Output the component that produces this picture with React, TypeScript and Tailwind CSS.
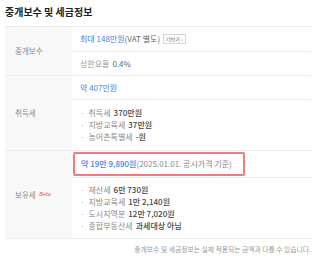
import { ReactNode } from 'react'

const font = { fontFamily: '"Noto Sans CJK KR", "Noto Sans", sans-serif' }

function Group({ label, children }: { label: ReactNode; children: ReactNode }) {
  return (
    <div className="flex border-b border-[#ececec]">
      <div className="w-[67px] shrink-0 bg-[#f8f8f8] flex items-center pl-[10px] text-[7.5px] text-[#8a8a8a]">{label}</div>
      <div className="flex-1 flex flex-col">{children}</div>
    </div>
  )
}

function Bullet({ name, value }: { name: string; value: string }) {
  return (
    <div className="flex items-center h-[12px]">
      <span className="text-[#aaa] mr-[4px]">·</span>
      <span className="text-[#8a8a8a] mr-[3px]">{name}</span>
      <span className="text-[#444] font-medium">{value}</span>
    </div>
  )
}

export default function App() {
  return (
    <div className="w-[322px] h-[256px] bg-white px-[5px] pt-[4px] overflow-hidden" style={font}>
      <h1 className="text-[10px] font-bold text-[#222] h-[16px] leading-[16px]">중개보수 및 세금정보</h1>

      <div className="mt-[6px] w-[306px] border-t border-[#ececec] text-[8px]">
        <Group label="중개보수">
          <div className="h-[25px] flex items-center pl-[8px] border-b border-[#ececec]">
            <span className="text-[#4a7fe3]">최대 148만원</span>
            <span className="text-[#666]">(VAT 별도)</span>
            <span className="ml-[3px] border border-[#d5d5d5] px-[2px] h-[10px] flex items-center text-[5px] text-[#555]">더보기 ›</span>
          </div>
          <div className="h-[23px] flex items-center pl-[8px] text-[#999]">
            상한요율 <span className="ml-[3px] text-[#666]">0.4%</span>
          </div>
        </Group>

        <Group label="취득세">
          <div className="h-[24px] flex items-center pl-[8px] border-b border-[#ececec]">
            <span className="text-[#4a7fe3]">약 407만원</span>
          </div>
          <div className="h-[50px] flex flex-col justify-center pl-[8px]">
            <Bullet name="취득세" value="370만원" />
            <Bullet name="지방교육세" value="37만원" />
            <Bullet name="농어촌특별세" value="-원" />
          </div>
        </Group>

        <Group
          label={
            <>
              보유세 <span className="ml-[3px] italic text-[5.5px] text-[#e85a4f]">Beta</span>
            </>
          }
        >
          <div className="h-[27px] flex items-center border-b border-[#ececec]">
            <div className="ml-[1px] w-[172px] h-[24px] flex items-center pl-[6px] border-2 border-[#ee7d7d] rounded-[2px] whitespace-nowrap">
              <span className="text-[#4a7fe3] font-medium">약 19만 9,890원</span>
              <span className="text-[#888]">(2025.01.01. 공시가격 기준)</span>
            </div>
          </div>
          <div className="h-[60px] flex flex-col justify-center pl-[8px]">
            <Bullet name="재산세" value="6만 730원" />
            <Bullet name="지방교육세" value="1만 2,140원" />
            <Bullet name="도시지역분" value="12만 7,020원" />
            <Bullet name="종합부동산세" value="과세대상 아님" />
          </div>
        </Group>
      </div>

      <p className="w-[306px] text-right mt-[5px] text-[6.8px] text-[#999]">
        중개보수 및 세금정보는 실제 적용되는 금액과 다를 수 있습니다.
      </p>
    </div>
  )
}
